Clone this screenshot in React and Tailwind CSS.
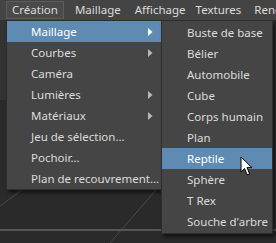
import React from 'react';

const mainItems = [
  { label: 'Maillage', sub: true, active: true },
  { label: 'Courbes', sub: true },
  { label: 'Caméra' },
  { label: 'Lumières', sub: true },
  { label: 'Matériaux', sub: true },
  { label: 'Jeu de sélection...' },
  { label: 'Pochoir...' },
  { label: 'Plan de recouvrement...' },
];

const meshItems = [
  'Buste de base',
  'Bélier',
  'Automobile',
  'Cube',
  'Corps humain',
  'Plan',
  'Reptile',
  'Sphère',
  'T Rex',
  "Souche d'arbre",
];

function Arrow({ active }) {
  return (
    <svg width="5" height="8" viewBox="0 0 5 8" className="absolute left-[141px] top-[7px]">
      <path d="M0 0 L4.5 4 L0 8 Z" fill={active ? '#ffffff' : '#b8b8b8'} />
    </svg>
  );
}

function Cursor() {
  return (
    <svg width="14" height="21" viewBox="0 0 14 21" className="absolute left-[240px] top-[156px]">
      <path
        d="M1 1 L1 16 L4.5 12.5 L7.2 18.8 L9.6 17.8 L7 11.6 L12 11.6 Z"
        fill="#ffffff"
        stroke="#000000"
        strokeWidth="1"
        strokeLinejoin="round"
      />
    </svg>
  );
}

export default function App() {
  return (
    <div className="relative w-[276px] h-[243px] overflow-hidden bg-[#2a2a2a] font-['Noto_Sans',sans-serif] text-[11.5px] leading-none">
      {/* menu bar */}
      <div className="flex items-center h-[20px] bg-[#444444] text-[#dcdcdc] pl-[6px] whitespace-nowrap">
        <div className="h-[18px] flex items-center px-[5px] bg-[#4a4a4a] border border-[#5c5c5c]">Création</div>
        <div className="ml-[11px]">Maillage</div>
        <div className="ml-[14px]">Affichage</div>
        <div className="ml-[10px]">Textures</div>
        <div className="ml-[13px]">Rendu</div>
      </div>

      {/* viewport */}
      <div className="relative h-[223px]">
        <div className="absolute left-0 top-0 w-[6px] h-[80px] bg-[#333333]" />
        <svg width="276" height="223" className="absolute left-0 top-0">
          <line x1="0" y1="186" x2="60" y2="142" stroke="#4a4a4a" strokeWidth="1" />
          <line x1="110" y1="223" x2="175" y2="148" stroke="#4a4a4a" strokeWidth="1" />
          <line x1="0" y1="210" x2="276" y2="210" stroke="#555555" strokeWidth="2" />
        </svg>
      </div>

      {/* Création menu */}
      <div className="absolute left-[6px] top-[20px] w-[156px] bg-[#454545] border border-[#2e2e2e] shadow-[2px_3px_3px_rgba(0,0,0,0.5)] text-[#dcdcdc]">
        {mainItems.map((it) => (
          <div
            key={it.label}
            className={
              'relative h-[21px] flex items-center pl-[24px] whitespace-nowrap ' +
              (it.active ? 'bg-[#5f8bb3] text-white' : '')
            }
          >
            {it.label}
            {it.sub && <Arrow active={it.active} />}
          </div>
        ))}
      </div>

      {/* Maillage submenu */}
      <div className="absolute left-[161px] top-[20px] w-[112px] py-[1px] bg-[#454545] border border-[#2e2e2e] shadow-[2px_3px_3px_rgba(0,0,0,0.5)] text-[#dcdcdc]">
        {meshItems.map((label) => (
          <div
            key={label}
            className={
              'h-[21px] flex items-center pl-[25px] whitespace-nowrap ' +
              (label === 'Reptile' ? 'bg-[#5f8bb3] text-white' : '')
            }
          >
            {label}
          </div>
        ))}
      </div>

      <Cursor />
    </div>
  );
}
